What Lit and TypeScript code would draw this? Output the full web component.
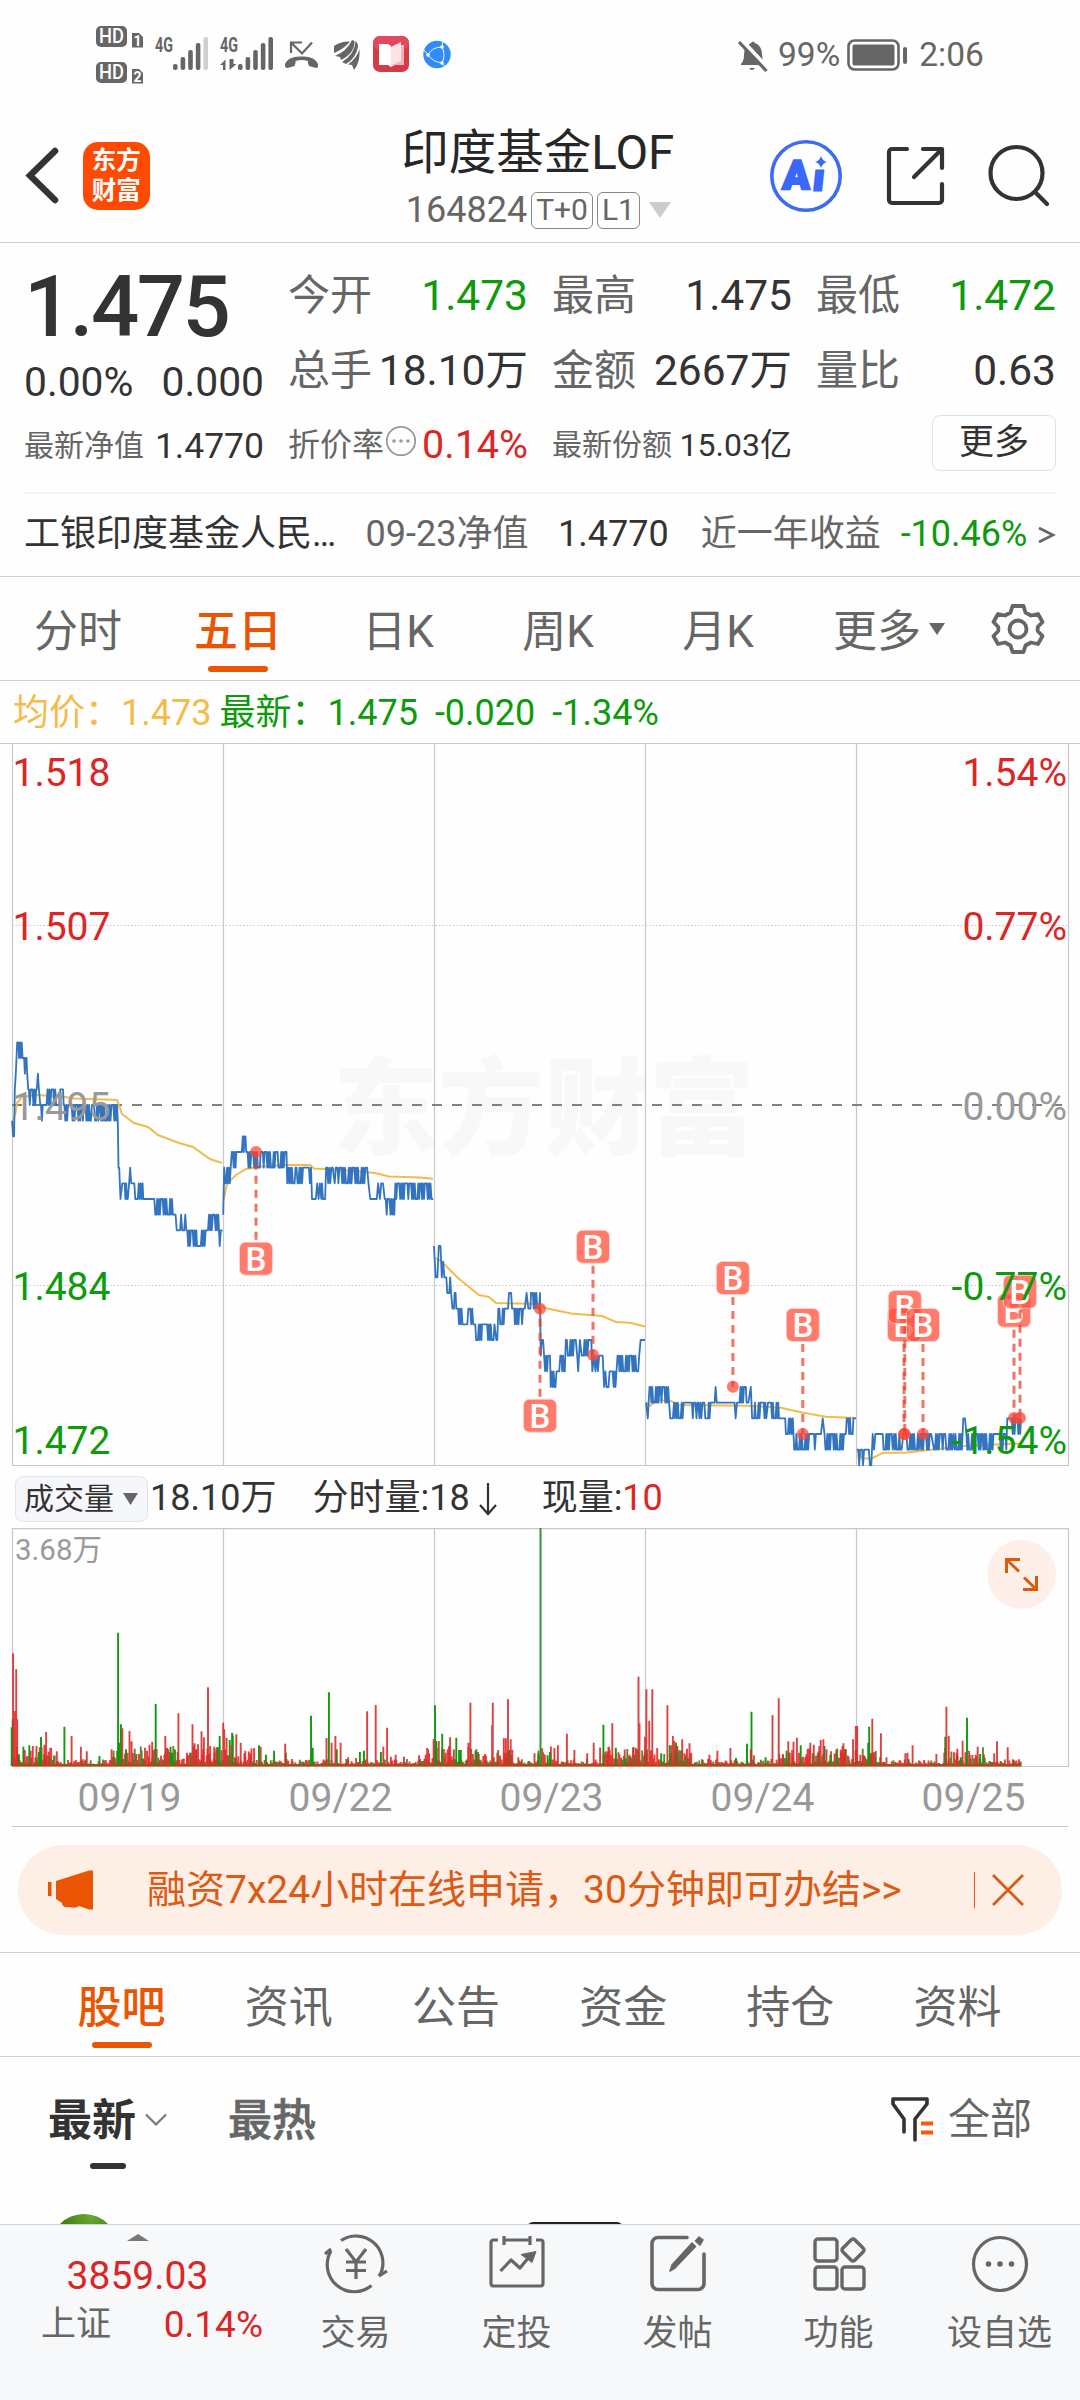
import { LitElement, html, svg, css } from "lit";
import { customElement } from "lit/decorators.js";

/* ---------- chart data ---------- */

// Horizontal sample unit and price tick height, in pixels.
const UX = 540 / 1568;
const TICK = 15.667;
const BASE_Y = 1105;

// [x, tick] is a single sample; [x0, x1, high, low] alternates between two ticks.
type Seg = number[];

const PRICE: Seg[][] = [
  [
    [35, 1], [38, 2], [41, 2], [43, -1], [46, -2], [50, -4], [53, 68, -4, -3], [70, 77, -3, -2], [79, -2], [82, -1],
    [84, 105, -1, 0], [107, -1], [110, -2], [113, -1], [117, 0], [119, 127, 0, 1], [130, 0], [135, 0], [138, 163, -1, 0],
    [172, 0], [175, -1], [183, -1], [185, 0], [187, 200, 0, 1], [203, 0], [208, 236, 0, 1], [238, 264, 0, 1],
    [267, 0], [273, 0], [276, 288, 0, 1], [291, 340, 0, 1], [342, 1], [344, 4], [346, 4], [350, 6], [355, 5], [362, 5],
    [364, 371, 6, 5], [375, 5], [378, 4], [381, 5], [390, 5], [393, 6], [400, 6], [403, 414, 5, 6], [416, 6], [448, 6],
    [451, 502, 6, 7], [510, 7], [513, 8], [523, 8], [526, 7], [529, 8], [535, 8], [538, 7], [541, 8], [544, 570, 8, 9],
    [572, 9], [583, 9], [586, 597, 8, 9], [598, 8], [604, 8], [607, 634, 7, 8], [638, 9], [641, 8], [646, 8],
  ],
  [
    [648, 7], [651, 4], [654, 670, 4, 5], [673, 3], [676, 684, 3, 4], [686, 3], [702, 3], [705, 2], [708, 3], [710, 2],
    [713, 2], [715, 3], [719, 757, 3, 4], [760, 3], [763, 800, 3, 4], [803, 3], [806, 832, 3, 4], [834, 5],
    [837, 858, 4, 5], [861, 4], [864, 885, 4, 5], [888, 4], [891, 903, 4, 5], [906, 6], [917, 6], [921, 5], [925, 6],
    [929, 5], [933, 6], [935, 5], [938, 6], [944, 6], [947, 4], [950, 962, 4, 5], [966, 4], [972, 5], [975, 4],
    [980, 1010, 4, 5], [1013, 1066, 4, 5], [1070, 5], [1075, 6], [1094, 6], [1098, 5], [1103, 6], [1107, 5], [1112, 5],
    [1117, 6], [1120, 1145, 6, 7], [1148, 1162, 5, 6], [1165, 5], [1168, 1175, 6, 5], [1180, 5], [1183, 1220, 5, 6],
    [1223, 1250, 5, 6], [1253, 6], [1258, 6],
  ],
  [
    [1260, 9], [1265, 11], [1270, 11], [1274, 9], [1279, 9], [1283, 11], [1287, 10], [1290, 11], [1293, 11],
    [1296, 1310, 11, 12], [1314, 13], [1318, 13], [1320, 12], [1323, 12], [1325, 1343, 13, 14], [1345, 14], [1357, 14],
    [1360, 1371, 13, 14], [1374, 14], [1380, 1398, 14, 15], [1400, 14], [1406, 14], [1409, 1433, 14, 15], [1436, 14],
    [1441, 15], [1444, 15], [1447, 13], [1450, 1465, 13, 14], [1468, 13], [1475, 13], [1478, 12], [1484, 12], [1487, 13],
    [1493, 13], [1495, 1516, 14, 13], [1519, 13], [1524, 13], [1529, 12], [1534, 13], [1540, 13], [1542, 1568, 12, 13],
    [1570, 16], [1573, 15], [1577, 15], [1580, 1597, 16, 17], [1599, 18], [1602, 1613, 17, 18], [1616, 17], [1624, 17],
    [1627, 16], [1630, 1640, 16, 17], [1643, 15], [1646, 1672, 15, 16], [1676, 16], [1679, 17], [1684, 15],
    [1689, 1714, 16, 15], [1717, 15], [1720, 17], [1725, 16], [1729, 17], [1733, 16], [1736, 17], [1740, 16], [1750, 16],
    [1754, 18], [1758, 1770, 17, 18], [1772, 17], [1779, 17], [1782, 1790, 18, 17], [1793, 16], [1796, 1856, 16, 17],
    [1860, 15], [1873, 15],
  ],
  [
    [1876, 19], [1881, 20], [1886, 18], [1889, 1915, 18, 19], [1918, 1943, 18, 19], [1946, 20], [1954, 20],
    [1957, 1985, 19, 20], [1988, 19], [2006, 19], [2009, 2025, 19, 20], [2028, 2048, 19, 20], [2051, 20], [2056, 20],
    [2058, 2068, 19, 20], [2071, 19], [2075, 19], [2078, 18], [2081, 19], [2133, 19], [2136, 20], [2140, 19], [2143, 19],
    [2145, 2168, 18, 19], [2173, 19], [2180, 18], [2184, 20], [2190, 20], [2192, 2208, 19, 20], [2212, 19],
    [2215, 2225, 20, 19], [2230, 19], [2236, 19], [2239, 2260, 19, 20], [2262, 20], [2280, 20], [2282, 21],
    [2285, 2302, 20, 21], [2306, 22], [2310, 2320, 22, 21], [2323, 2352, 21, 22], [2356, 21], [2364, 21], [2366, 22],
    [2369, 21], [2384, 21], [2389, 20], [2394, 21], [2397, 2456, 21, 22], [2459, 20], [2463, 2476, 20, 21], [2478, 20],
    [2486, 20],
  ],
  [
    [2488, 22], [2492, 2506, 22, 23], [2509, 22], [2523, 22], [2526, 23], [2530, 23], [2534, 21], [2538, 22], [2542, 21],
    [2560, 21], [2563, 2592, 21, 22], [2596, 2614, 21, 22], [2618, 22], [2623, 21], [2632, 21], [2635, 22], [2640, 22],
    [2643, 2668, 21, 22], [2672, 2700, 21, 22], [2704, 21], [2712, 2740, 21, 22], [2745, 2765, 21, 22], [2768, 21],
    [2772, 2793, 22, 21], [2797, 20], [2802, 20], [2806, 2850, 21, 22], [2853, 2890, 21, 22], [2894, 21],
    [2903, 2922, 21, 22], [2925, 20], [2933, 20], [2938, 2965, 20, 21],
  ],
];

// Average price, pixels.
const AVERAGE: string[] = [
  "12,1125 15.5,1113 17,1103 22,1097 38,1095 65,1097 74,1098.5 117,1100 122,1114 134,1123 148,1127 158,1135 179,1143 193,1147 210,1159 222,1163",
  "223.5,1200 227,1184 236,1175 246,1169 262,1166.5 286,1165 310,1165 314,1168.5 344,1170 375,1173 389,1176.5 420,1177.5 433,1178.7",
  "435.6,1258 442,1262 458,1278 479,1295 489,1297 496,1303 539,1304 545,1308 571,1313.5 602,1316 616,1322 630,1322.7 645,1326.5",
  "646,1402 650,1406 657,1400 671,1401 678,1405 747,1405.7 781,1407.7 802,1412.5 826,1416.7 856,1418",
  "857,1449 862,1458.5 872,1458.5 883,1452.7 905,1452.7 933,1449.5 964,1446 1020,1443.5",
];

type Marker = { x: number; badge: number; dot: number };
const MARKERS: Marker[] = [
  { x: 256, badge: 1258.7, dot: 1152 },
  { x: 540, badge: 1415.7, dot: 1308.7 },
  { x: 593, badge: 1246.7, dot: 1355 },
  { x: 732.9, badge: 1278, dot: 1386.7 },
  { x: 802.8, badge: 1325, dot: 1434 },
  { x: 904, badge: 1325, dot: 1434 },
  { x: 904.8, badge: 1307, dot: 1434 },
  { x: 923, badge: 1325, dot: 1434 },
  { x: 1014, badge: 1310.7, dot: 1418 },
  { x: 1020, badge: 1291.7, dot: 1418 },
];

// Tall volume bars as "x,height" pairs in sample units.
const VOL_UP =
  "38,338 47,290 42,165 50,140 72,48 89,46 106,60 134,102 129,64 165,44 208,90 235,58 252,44 324,50 355,113 376,105 382,74 421,55 434,64 442,73 480,90 488,50 518,158 543,40 559,125 565,68 570,50 575,65 585,104 592,86 604,236 610,60 622,58 628,52 648,130 651,110 658,85 672,62 686,95 699,70 712,46 727,28 757,58 828,67 948,84 963,70 974,90 989,70 1011,26 1034,24 1066,164 1091,183 1113,58 1124,115 1135,28 1149,34 1173,28 1217,32 1236,34 1246,38 1259,80 1274,75 1294,40 1300,50 1307,86 1318,50 1360,70 1366,190 1388,42 1408,36 1429,122 1431,190 1444,40 1463,83 1469,83 1475,200 1483,80 1505,26 1552,38 1620,62 1646,97 1668,48 1705,38 1724,70 1767,58 1763,44 1778,128 1828,34 1838,55 1846,55 1854,268 1857,128 1873,88 1877,230 1885,136 1894,230 1938,182 1950,62 1954,90 1958,75 1967,60 1981,80 2002,68 2007,40 2060,34 2083,46 2121,54 2180,50 2189,32 2243,152 2261,203 2274,35 2289,74 2300,48 2304,73 2314,85 2320,40 2338,26 2345,52 2353,70 2363,64 2379,60 2383,78 2391,80 2400,50 2443,40 2449,68 2454,48 2477,80 2485,120 2489,120 2498,34 2506,32 2512,26 2533,142 2530,40 2558,98 2574,26 2629,38 2635,40 2650,62 2719,36 2748,178 2755,90 2780,52 2795,76 2814,46 2833,34 2887,38 2895,74 2926,56 2941,20 2959,20";
const VOL_DOWN =
  "34,116 37,140 55,35 68,58 85,62 119,87 113,42 187,118 289,30 343,400 351,125 346,70 366,50 452,186 495,58 500,40 638,90 632,56 667,78 674,100 676,92 752,62 772,34 796,46 830,40 903,151 908,55 955,221 978,50 1045,42 1057,46 1106,42 1263,182 1267,75 1284,97 1325,85 1333,48 1338,48 1383,50 1390,36 1479,48 1563,38 1597,42 1590,32 1752,124 1788,55 1878,50 1920,38 1945,62 1963,70 2137,24 2169,67 2182,163 2223,26 2284,46 2325,62 2394,60 2411,34 2430,32 2456,50 2524,118 2521,70 2745,88 2790,26 2808,145 2846,36 2638,20";

const GREEN = "#0d9a0d";
const RED = "#e62626";
const VLINES = [12.5, 223.5, 434.5, 645.5, 856.5, 1068.5];

function pricePath(day: Seg[]): string {
  const pts: string[] = [];
  const put = (x: number, n: number) => pts.push(`${(x * UX).toFixed(1)},${(BASE_Y + n * TICK).toFixed(1)}`);
  for (const s of day) {
    if (s.length === 2) {
      put(s[0], s[1]);
      continue;
    }
    const [x0, x1, a, b] = s;
    const count = Math.max(2, Math.round((x1 - x0) / 2.7));
    for (let i = 0; i <= count; i++) {
      const hold = (i + Math.round(x0)) % 7 === 3;
      put(x0 + ((x1 - x0) * i) / count, (i % 2 === 0) !== hold ? a : b);
    }
  }
  return "M" + pts.join("L");
}

function bars(list: string): string {
  return list
    .split(" ")
    .map((p) => {
      const [x, h] = p.split(",").map(Number);
      return `M${(x * UX).toFixed(1)},1766V${(1766 - h / 3).toFixed(1)}`;
    })
    .join("");
}

// Low background volume, minute by minute, with busier stretches around the opens.
function noise(up: boolean): string {
  let seed = 77;
  const rnd = () => ((seed = (seed * 16807) % 2147483647) / 2147483647);
  const busy = [[34, 160], [320, 480], [480, 740], [1230, 1490], [1560, 1620], [1740, 2010], [2260, 2560], [2740, 2860]];
  let d = "";
  for (let x = 34; x < 2966; x += 2.55) {
    const r = rnd();
    const isUp = rnd() < 0.68;
    const amp = busy.some(([a, b]) => x > a && x < b) ? 14 : 5;
    const h = 2 + amp * r * r * r + (amp > 5 ? 4 * r : 0);
    if (isUp === up) d += `M${(x * UX).toFixed(1)},1766v${(-h).toFixed(1)}`;
  }
  return d;
}

/* ---------- icons ---------- */

const hdBadge = (n: string) => svg`
  <rect x="0" y="0" width="31" height="21" rx="5" fill="#666"/>
  <text x="15.5" y="17.2" text-anchor="middle" font-size="19.500" font-weight="500" fill="#fff" textLength="25" lengthAdjust="spacingAndGlyphs">HD</text>
  <path d="M36 7h7l4 4v10.500h-11z" fill="#666"/>
  <text x="41.5" y="19.500" text-anchor="middle" font-size="14" font-weight="700" fill="#fff">${n}</text>`;

const signalBars = (x: number, last: string) => svg`
  ${[6, 13, 20, 27, 33].map((h, i) => svg`<rect x=${x + i * 7.6} y=${34 - h} width="4.6" height=${h} rx="2" fill=${i === 4 ? last : "#666"}/>`)}`;

const iconTrade = svg`<g fill="none" stroke="#666" stroke-width="3.2">
  <path d="M18 7.5A27 27 0 0 1 58 40"/><path d="M48.5 52.5A27 27 0 0 1 8 18"/>
  <path d="M58 40l-2 3 8-5"/><path d="M8 16l-6 5"/>
  <path d="M23 16l10 13 10-13M33 29v17M23 29h20M23 37.500h20"/></g>`;
const iconPlan = svg`<g fill="none" stroke="#666" stroke-width="3.200" stroke-linejoin="round">
  <path d="M14 7H9.500a2.500 2.500 0 0 0-2.500 2.500v41a2.500 2.500 0 0 0 2.500 2.500h47a2.500 2.500 0 0 0 2.500-2.500v-41A2.500 2.500 0 0 0 56.500 7h-4.500"/>
  <path d="M20 3v9M46 3v9M20 7h26"/><path d="M16.500 38l10.500-11 9 8 9-11"/><path d="M37 21.500l15-3-4 11z" fill="#666" stroke-width="1"/></g>`;
const iconPost = svg`<g fill="none" stroke="#666" stroke-width="3.600" stroke-linecap="round">
  <path d="M42 4.500H13a6 6 0 0 0-6 6v40a6 6 0 0 0 6 6h40a6 6 0 0 0 6-6V21"/>
  <path d="M25 38l2-6L47 10l3.500 3.500L30 35z" fill="#666" stroke-width="1.500" stroke-linejoin="round"/>
  <path d="M50.500 8l3.500-4 4 3-3 5z" fill="#666" stroke-width="1.500"/></g>`;
const iconApps = svg`<g fill="none" stroke="#666" stroke-width="3.400">
  <rect x="9" y="6" width="22" height="22" rx="3"/><rect x="9" y="34" width="22" height="22" rx="3"/><rect x="36" y="34" width="22" height="22" rx="3"/>
  <rect x="-8.500" y="-8.500" width="17" height="17" rx="2.500" transform="translate(47 17) rotate(45)"/></g>`;
const iconDots = svg`<circle cx="33" cy="31" r="26.500" fill="none" stroke="#666" stroke-width="3.200"/>
  <g fill="#666"><circle cx="21.500" cy="31" r="2.800"/><circle cx="33" cy="31" r="2.800"/><circle cx="44.500" cy="31" r="2.800"/></g>`;

@customElement("app-root")
export class AppRoot extends LitElement {
  static styles = css`
    :host {
      display: block;
      width: 1080px;
      height: 2400px;
      overflow: hidden;
      background: #fefefe;
      color: #333;
      font-family: Roboto, "Noto Sans CJK SC", sans-serif;
      line-height: 1.2;
    }
    * { box-sizing: border-box; }
    svg { display: block; flex: none; overflow: visible; font-family: Roboto, "Noto Sans CJK SC", sans-serif; }
    .page { display: flex; flex-direction: column; height: 2400px; }
    .row { display: flex; align-items: center; }
    .green { color: #0d9a0d; }
    .red { color: #dc2626; }
    .gray { color: #666; }

    .status { height: 110px; flex: none; padding-left: 96px; align-items: flex-start; color: #666; font-size: 33.500px; line-height: 40px; }
    .status-right { padding-top: 35px; margin-left: 286px; }
    .status .pct { margin: 0 7px 0 9px; }
    .status .clock { margin-left: 11px; }
    .mid { margin-top: 36px; }

    .header { height: 133px; flex: none; border-bottom: 1px solid #d2d2d2; padding: 0 30px 0 26px; align-items: flex-start; }
    .back { margin-top: 36px; }
    .logo { margin: 32px 0 0 23px; width: 68px; height: 68px; border-radius: 15px; background: #ff4a04; color: #fff; font-weight: 700; font-size: 24.500px; line-height: 29.500px; text-align: center; padding-top: 4px; }
    .title { width: 300px; margin-left: 241px; text-align: center; }
    .name { font-size: 47.500px; line-height: 56px; margin-top: 15px; color: #262626; white-space: nowrap; }
    .code { font-size: 36px; line-height: 42px; margin: 8px 0 0 1px; color: #666; justify-content: center; }
    .tag { border: 1.500px solid #888; border-radius: 6px; height: 37px; line-height: 34px; font-size: 30px; padding: 0 4px; margin-left: 4px; }
    .ai { margin: 29px 0 0 84px; }
    .share { margin: 35px 0 0 42px; }
    .search { margin: 34px 0 0 43px; }

    .quote { height: 249px; flex: none; padding: 14px 24px 0; display: grid; grid-template-columns: repeat(4, 240px); column-gap: 24px; }
    .col { display: flex; flex-direction: column; }
    .stat { height: 75px; display: flex; align-items: center; justify-content: space-between; font-size: 42.500px; line-height: 50px; white-space: nowrap; padding-top: 2px; }
    .stat.small { padding-top: 0; }
    .stat .k { color: #666; font-size: 42px; }
    .stat.small .k { font-size: 30px; }
    .stat.small .k32 { font-size: 32px; }
    .v35 { font-size: 35.500px; }
    .v39 { font-size: 39.500px; }
    .v32 { font-size: 32px; }
    .info { margin: -8px 4px 0 0; }
    .price { height: 101px; line-height: 101px; font-size: 85px; font-weight: 500; letter-spacing: -2.500px; }
    .chg { height: 50px; line-height: 48px; font-size: 40.800px; display: flex; justify-content: space-between; }
    .more-cell { height: 75px; display: flex; justify-content: flex-end; align-items: center; padding-bottom: 4px; }
    .more { width: 124px; height: 56px; border: 1.500px solid #e2e2e2; border-radius: 8px; font-size: 35px; line-height: 54px; text-align: center; }

    .fund { height: 84px; flex: none; margin: 0 24px; border-top: 2px solid #f5f5f5; font-size: 36px; padding-bottom: 1px; white-space: nowrap; }
    .fund .c2 { margin-left: 29.500px; }
    .fund .c3 { margin-left: 32px; }

    .tabs { height: 105px; flex: none; border-top: 1px solid #d2d2d2; border-bottom: 1px solid #d2d2d2; font-size: 44px; color: #666; align-items: stretch; }
    .tab { width: 160px; display: flex; flex-direction: column; align-items: center; line-height: 50px; padding: 30px 4px 0 0; }
    .tab.on { color: #ea5504; font-weight: 500; }
    .bar { width: 60px; height: 6px; border-radius: 3px; background: #ea5504; margin-top: 9px; }
    .tab-more { width: 178px; flex-direction: row; justify-content: center; align-items: flex-start; padding-right: 0; }
    .tri { margin: 16px 0 0 8px; }
    .gear { margin-top: 25px; }

    .legend { height: 62px; flex: none; padding: 3px 0 0 13px; font-size: 36px; white-space: nowrap; }
    .legend .avg { color: #f3bc49; margin-right: 8px; }
    .legend .green span { margin-right: 17px; }

    .vol-head { height: 62px; flex: none; padding: 1px 0 0 15px; font-size: 36px; white-space: nowrap; align-items: center; }
    .select { width: 133px; height: 46px; background: #f6f7fa; border: 1.500px solid #e4e5ec; border-radius: 8px; font-size: 30px; padding-left: 8px; margin-right: 2px; }

    .banner { height: 90px; flex: none; margin: 17px 18px 0; border-radius: 45px; background: #fdeee6; color: #dc5a14; font-size: 39px; padding: 0 38px 0 29px; white-space: nowrap; }
    .banner .msg { margin-left: 53px; flex: 1; }
    .sep { width: 1.500px; height: 36px; background: #dc5a14; margin-right: 17px; }

    .sections { margin-top: 17px; padding-left: 38px; }
    .sections .tab { width: 167.200px; padding-right: 0; }

    .sort { height: 112px; flex: none; font-size: 44px; line-height: 50px; font-weight: 700; padding: 0 48px; align-items: flex-start; }
    .sort .on { color: #333; padding-top: 39px; display: flex; flex-direction: column; width: 88px; }
    .sort .under { width: 36px; height: 6px; border-radius: 3px; background: #333; margin: 17px 0 0 42px; }
    .sort .hot { color: #666; font-weight: 500; -webkit-text-stroke: 0.600px #666; padding-top: 39px; margin-left: 61px; flex: 1; }
    .sort .all { color: #666; font-weight: 400; font-size: 42px; padding-top: 38px; margin-left: 14px; }

    .feed { height: 55px; flex: none; overflow: hidden; display: flex; padding-left: 50px; }
    .avatar { width: 68px; height: 68px; border-radius: 50%; margin-top: 45px; flex: none; background: radial-gradient(circle at 60% 5%, #68a832, #3f7a14 40%); }
    .photo { width: 96px; height: 30px; border-radius: 6px; background: #2a201c; margin: 53px 0 0 409px; flex: none; }

    .nav { flex: 1; border-top: 1.500px solid #d0d3d8; background: #f7f8fa; align-items: stretch; }
    .index { width: 275px; display: flex; flex-direction: column; align-items: center; padding-top: 9px; line-height: 48px; }
    .index .num { font-size: 39px; margin-top: 11px; }
    .index .line { display: flex; justify-content: space-between; width: 222px; font-size: 37px; margin: 1px 0 0 29px; }
    .index .line .gray { font-size: 35px; }
    .item { width: 161px; display: flex; flex-direction: column; align-items: center; padding-top: 8px; color: #666; font-size: 35px; line-height: 44px; }
    .item .cap { margin-top: 17px; }
  `;

  private renderStatus() {
    return html`<div class="row status">
      <svg width="48" height="100" viewBox="0 0 48 100"><g transform="translate(0 26)">${hdBadge("1")}</g><g transform="translate(0 62)">${hdBadge("2")}</g></svg>
      <svg class="mid" style="margin-left:11px" width="54" height="36" viewBox="0 0 54 36">
        <text x="0" y="16" font-size="21" font-weight="700" fill="#666" textLength="18" lengthAdjust="spacingAndGlyphs">4G</text>${signalBars(18, "#cfcfcf")}</svg>
      <svg class="mid" style="margin-left:11px" width="54" height="36" viewBox="0 0 54 36">
        <text x="0" y="16" font-size="21" font-weight="700" fill="#666" textLength="18" lengthAdjust="spacingAndGlyphs">4G</text>
        <path d="M5.500 34V23.500L0 29h3v5zM9.500 23v11l7-6h-3v-5z" fill="#666"/>${signalBars(18, "#666")}</svg>
      <svg class="mid" style="margin-left:10px" width="36" height="36" viewBox="0 0 36 36">
        <path d="M7 17V6.500h11M7.500 7l10.500 10.500L28 6.500" fill="none" stroke="#666" stroke-width="2.200"/>
        <path d="M1 28C4 21 12 20.500 17.500 20.500S31 21 34 28q.5 4-2 4l-7-2q-1.500-4-1-5-6-2-12.500 0 .5 2-1 5l-7 2q-3 0-2.500-4z" fill="#666"/></svg>
      <svg class="mid" style="margin-left:14px" width="27" height="36" viewBox="0 0 27 36" fill="#666">
        <path d="M0 10Q7 5 16 5.500Q10 13 0 17z"/><path d="M1 20Q13 15 18 4l2.500 1Q21 17 7 24L6 21z"/><path d="M21.500 5q2.500 2 2.500 6Q22 22 12 28l-4-2Q21 18 21.500 5z"/><path d="M25.500 13q1 13-5.500 21l-2-5-4-.5Q23 22 25.500 13z"/></svg>
      <svg class="mid" style="margin-left:12px" width="36" height="36" viewBox="0 0 36 36">
        <rect width="36" height="36" rx="7" fill="#d43a48"/><rect y="0" width="36" height="14" rx="7" fill="#e04a5c"/>
        <path d="M6 8h9l3 2v21l-3-2H6z" fill="#fff"/><path d="M18 11l10-5v20l-10 5z" fill="#fde2e6"/><path d="M28 9h3v20H19l9-4z" fill="#f6b3bb"/></svg>
      <svg class="mid" style="margin-left:14px" width="28" height="36" viewBox="0 0 28 36">
        <circle cx="14" cy="18.500" r="13.700" fill="#338cf5"/>
        <path d="M5 19Q9 11 19 11M5 19Q10 26 19 27M19 11Q23 19 19 27M1 14l4 5M20 5l-1 6M19 27l3 4" fill="none" stroke="#dff" stroke-width="1"/>
        <circle cx="5" cy="19" r="1.800" fill="#fff"/><circle cx="19" cy="11" r="1.800" fill="#fff"/><circle cx="19" cy="27" r="1.800" fill="#fff"/></svg>
      <div class="row status-right">
        <svg width="32" height="34" viewBox="0 0 32 34">
          <path d="M4 26q3-3 3-9 0-9 7-12 2-3 4 0 7 3 7 11 0 7 3 10v1H4z" fill="#666"/><path d="M12 30h6q-3 4-6 0z" fill="#666"/>
          <path d="M4 2L31 31" stroke="#fefefe" stroke-width="5"/><path d="M2 4L29.500 33" stroke="#666" stroke-width="3.200"/></svg>
        <span class="pct">99%</span>
        <svg width="61" height="34" viewBox="0 0 61 34"><rect x="1.500" y="2.500" width="50" height="29" rx="6" fill="none" stroke="#666" stroke-width="2.600"/><rect x="5.500" y="6.500" width="42" height="21" rx="2" fill="#666"/><rect x="56" y="9" width="4" height="17" rx="2" fill="#666"/></svg>
        <span class="clock">2:06</span>
      </div>
    </div>`;
  }

  private renderHeader() {
    return html`<div class="row header">
      <svg class="back" width="34" height="58" viewBox="0 0 34 58"><path d="M29 5L4 29.500L29 54" fill="none" stroke="#333" stroke-width="6.500" stroke-linecap="round"/></svg>
      <div class="logo">东方<br />财富</div>
      <div class="title">
        <div class="name">印度基金LOF</div>
        <div class="row code">164824<span class="tag">T+0</span><span class="tag">L1</span>
          <svg style="margin-left:9px" width="22" height="16"><path d="M0 0h22L11 16z" fill="#ccc"/></svg></div>
      </div>
      <svg class="ai" width="74" height="74" viewBox="0 0 74 74"><circle cx="37" cy="37" r="34.200" fill="none" stroke="#3b6cf2" stroke-width="3.600"/>
        <g fill="#3a68fb" stroke="#3a68fb" font-weight="900">
          <text x="14" y="50" font-size="40" stroke-width="2.500" textLength="27" lengthAdjust="spacingAndGlyphs" transform="translate(2 0) skewX(-3)">A</text>
          <text x="44" y="51.500" font-size="36" stroke-width="3" transform="translate(5 0) skewX(-6)">ı</text></g>
        <path d="M52 17q1.500 5 6 6-4.500 1-6 6-1.500-5-6-6 4.500-1 6-6z" fill="#3a68fb"/></svg>
      <svg class="share" width="60" height="62" viewBox="0 0 60 62" fill="none" stroke="#333" stroke-width="4.200" stroke-linecap="round" stroke-linejoin="round"><path d="M22 4H7a3 3 0 0 0-3 3v48a3 3 0 0 0 3 3h47a3 3 0 0 0 3-3V39"/><path d="M38 4h19v19M55 6L29 32"/></svg>
      <svg class="search" width="62" height="64" viewBox="0 0 62 64" fill="none" stroke="#333" stroke-width="4.200" stroke-linecap="round"><circle cx="28.500" cy="29" r="26"/><path d="M47 48l12 12"/></svg>
    </div>`;
  }

  private stat(k: string, v: string, cls = "") {
    return html`<div class="stat"><span class="k">${k}</span><span class=${cls}>${v}</span></div>`;
  }

  private renderQuote() {
    return html`<div class="quote">
      <div class="col">
        <div class="price">1.475</div>
        <div class="chg"><span>0.00%</span><span>0.000</span></div>
        <div class="stat small"><span class="k">最新净值</span><span class="v35">1.4770</span></div>
      </div>
      <div class="col">
        ${this.stat("今开", "1.473", "green")}${this.stat("总手", "18.10万")}
        <div class="stat small"><span class="k k32">折价率</span>
          <svg class="info" width="32" height="32" viewBox="0 0 32 32"><circle cx="16" cy="16" r="14.200" fill="none" stroke="#999" stroke-width="1.800"/><g fill="#999"><circle cx="9" cy="16" r="1.800"/><circle cx="16" cy="16" r="1.800"/><circle cx="23" cy="16" r="1.800"/></g></svg>
          <span class="red v39">0.14%</span></div>
      </div>
      <div class="col">
        ${this.stat("最高", "1.475")}${this.stat("金额", "2667万")}
        <div class="stat small"><span class="k">最新份额</span><span class="v32">15.03亿</span></div>
      </div>
      <div class="col">
        ${this.stat("最低", "1.472", "green")}${this.stat("量比", "0.63")}
        <div class="more-cell"><div class="more">更多</div></div>
      </div>
    </div>
    <div class="row fund">
      <span>工银印度基金人民…</span><span class="c2 gray">09-23净值</span><span class="c2">1.4770</span>
      <span class="c3 gray">近一年收益</span><span class="green" style="margin-left:20px">-10.46%</span>
      <svg style="margin-left:11px" width="18" height="18" viewBox="0 0 18 18"><path d="M1 2l14 7-14 7" fill="none" stroke="#666" stroke-width="2.600"/></svg>
    </div>`;
  }

  private renderPeriodTabs() {
    const tabs = ["分时", "五日", "日K", "周K", "月K"];
    return html`<div class="row tabs">
      ${tabs.map((t, i) => html`<div class="tab ${i === 1 ? "on" : ""}">${t}${i === 1 ? html`<div class="bar"></div>` : ""}</div>`)}
      <div class="tab tab-more">更多<svg class="tri" width="16" height="12"><path d="M0 0h16L8 12z" fill="#666"/></svg></div>
      <svg class="gear" width="80" height="54" viewBox="-40 -27 80 54" fill="none" stroke="#666" stroke-width="3.800" stroke-linejoin="round">
        <path d="M-5.500-23h11l2 6.500 5.500 3 7-1.500 4.500 8-4.800 5v4l4.800 5-4.500 8-7-1.500-5.500 3-2 6.500h-11l-2-6.500-5.500-3-7 1.500-4.500-8 4.800-5v-4l-4.800-5 4.500-8 7 1.500 5.500-3z"/><circle r="8.500"/></svg>
    </div>
    <div class="row legend"><span class="avg">均价：1.473</span><span class="green"><span>最新：1.475</span><span>-0.020</span><span>-1.34%</span></span></div>`;
  }

  private renderPrice() {
    const left: [number, string, string][] = [[786, "1.518", "#dc2626"], [940, "1.507", "#dc2626"], [1120, "1.495", "#999"], [1300, "1.484", GREEN], [1454, "1.472", GREEN]];
    const right: [number, string, string][] = [[786, "1.54%", "#dc2626"], [940, "0.77%", "#dc2626"], [1120, "0.00%", "#999"], [1300, "-0.77%", GREEN], [1454, "-1.54%", GREEN]];
    return html`<svg width="1080" height="724" viewBox="0 743 1080 724">
      <text x="333" y="1146" font-size="105.500" font-weight="900" fill="#f8f8f8">东方财富</text>
      <g stroke="#c8c8c8" stroke-width="1.200" fill="none">
        <path d="M0 743.500H1080M12 1465.500H1069"/>${VLINES.map((x) => svg`<path d="M${x} 743V1466"/>`)}
        <path d="M12 925.500H1068M12 1285.500H1068" stroke-dasharray="1.500 2"/>
      </g>
      <path d="M12 1105H1068" stroke="#808080" stroke-width="2" stroke-dasharray="10 10"/>
      ${AVERAGE.map((a) => svg`<polyline points=${a} fill="none" stroke="#f0bc4c" stroke-width="2"/>`)}
      ${PRICE.map((d) => svg`<path d=${pricePath(d)} fill="none" stroke="#3274c0" stroke-width="1.800" stroke-linejoin="round"/>`)}
      ${MARKERS.map((m) => {
        const dir = m.badge > m.dot ? -1 : 1;
        return svg`<g>
          <circle cx=${m.x} cy=${m.dot} r="6" fill="#ff4433" opacity="0.72"/>
          <path d="M${m.x} ${m.badge + dir * 19}V${m.dot}" stroke="#e8432e" stroke-width="3" stroke-dasharray="8 6" opacity="0.72"/>
          <rect x=${m.x - 16.5} y=${m.badge - 16.5} width="33" height="33" rx="6" fill="#ff503c" fill-opacity="0.75" stroke="#ffd5cf" stroke-width="0.800"/>
          <text x=${m.x} y=${m.badge + 12} text-anchor="middle" font-size="33" font-weight="500" fill="#fff">B</text></g>`;
      })}
      <g font-size="39">
        ${left.map(([y, t, c]) => svg`<text x="12.500" y=${y} fill=${c}>${t}</text>`)}
        ${right.map(([y, t, c]) => svg`<text x="1067" y=${y} text-anchor="end" fill=${c}>${t}</text>`)}
      </g>
    </svg>`;
  }

  private renderVolume() {
    const days = ["09/19", "09/22", "09/23", "09/24", "09/25"];
    return html`<div class="row vol-head">
      <div class="row select">成交量<svg style="margin-left:9px" width="15" height="12"><path d="M0 0h15L7.500 12z" fill="#666"/></svg></div>
      <span>18.10万</span><span style="margin-left:36px">分时量:18</span>
      <svg style="margin:0 0 0 8px" width="20" height="36" viewBox="0 0 20 36"><path d="M10 2v31M2 24l8 9 8-9" fill="none" stroke="#333" stroke-width="2.200"/></svg>
      <span style="margin-left:44px">现量:<span class="red">10</span></span>
    </div>
    <svg width="1080" height="299" viewBox="0 1529 1080 299">
      <g stroke="#c8c8c8" stroke-width="1.200" fill="none"><path d="M12 1528.600H1069M12 1766.500H1069M12 1826.500H1068"/>${VLINES.map((x) => svg`<path d="M${x} 1528V1766"/>`)}</g>
      <g stroke-width="1.900" fill="none">
        <path d=${noise(true)} stroke=${RED} opacity="0.900"/><path d=${noise(false)} stroke="#4a7a1a" opacity="0.900"/>
        <path d=${bars(VOL_DOWN)} stroke=${GREEN}/><path d=${bars(VOL_UP)} stroke="#dc2c2c" opacity="0.900"/>
        <path d="M540.500 1766V1528" stroke="#2d9a2d" stroke-width="2"/>
        <path d="M12 1765.500H1021" stroke="#a84a14" stroke-width="2"/>
      </g>
      <text x="15" y="1560" font-size="29.500" fill="#999">3.68万</text>
      <g font-size="39" fill="#999" text-anchor="middle">${days.map((d, i) => svg`<text x=${129.5 + i * 211} y="1810.500">${d}</text>`)}</g>
      <circle cx="1021.500" cy="1574.300" r="34.500" fill="#fef0e9"/>
      <path d="M1006.500 1573v-13.500H1020M1007 1560l12 11.500M1036.500 1576v13.500H1023M1036 1589l-12-11.500" fill="none" stroke="#dc5a10" stroke-width="3"/>
    </svg>`;
  }

  private renderLower() {
    const tabs = ["股吧", "资讯", "公告", "资金", "持仓", "资料"];
    return html`<div class="row banner">
      <svg width="47" height="42" viewBox="0 0 47 42"><path d="M1 13h3.500v14H1zM9 12L42 1.500h4v39h-4L32 37q-3 3-10 1-7 1-7-4l-6-4z" fill="#ea5504"/></svg>
      <span class="msg">融资7x24小时在线申请，30分钟即可办结&gt;&gt;</span>
      <span class="sep"></span>
      <svg width="32" height="32" viewBox="0 0 32 32"><path d="M1 1l30 30M31 1L1 31" stroke="#dc5a14" stroke-width="2.800"/></svg>
    </div>
    <div class="row tabs sections">${tabs.map((t, i) => html`<div class="tab ${i === 0 ? "on" : ""}">${t}${i === 0 ? html`<div class="bar"></div>` : ""}</div>`)}</div>
    <div class="row sort">
      <div class="on">最新<div class="under"></div></div>
      <svg style="margin:56px 0 0 9px" width="22" height="14" viewBox="0 0 22 14"><path d="M1 1.500l10 10 10-10" fill="none" stroke="#777" stroke-width="2.200"/></svg>
      <div class="hot">最热</div>
      <svg style="margin-top:38px" width="44" height="48" viewBox="0 0 44 48"><path d="M14 37V24L3 9V4h34v5L25 24v21" fill="none" stroke="#333" stroke-width="3.600" stroke-linecap="round" stroke-linejoin="round"/><path d="M31 28.500h12M31 37.500h12" stroke="#f4590c" stroke-width="4"/></svg>
      <div class="all">全部</div>
    </div>
    <div class="feed"><div class="avatar"></div><div class="photo"></div></div>`;
  }

  private renderNav() {
    const items: [unknown, string][] = [[iconTrade, "交易"], [iconPlan, "定投"], [iconPost, "发帖"], [iconApps, "功能"], [iconDots, "设自选"]];
    return html`<div class="row nav">
      <div class="index">
        <svg width="22" height="7"><path d="M0 7h22L11 0z" fill="#777"/></svg>
        <div class="num red">3859.03</div>
        <div class="line"><span class="gray">上证</span><span class="red">0.14%</span></div>
      </div>
      ${items.map(([icon, cap]) => html`<div class="item"><svg width="66" height="62" viewBox="0 0 66 62">${icon}</svg><div class="cap">${cap}</div></div>`)}
    </div>`;
  }

  render() {
    return html`<div class="page">${this.renderStatus()}${this.renderHeader()}${this.renderQuote()}${this.renderPeriodTabs()}${this.renderPrice()}${this.renderVolume()}${this.renderLower()}${this.renderNav()}</div>`;
  }
}
